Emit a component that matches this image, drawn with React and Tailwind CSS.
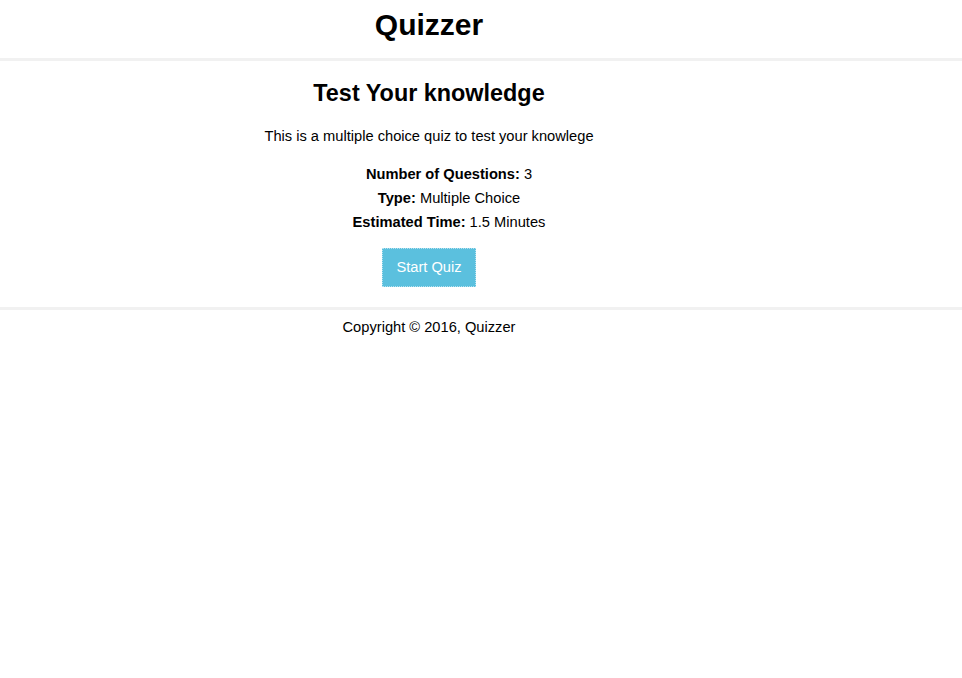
export default function App() {
  const font = { fontFamily: '"Liberation Sans", Arial, sans-serif' };
  return (
    <div className="min-h-screen bg-white text-black" style={font}>
      <header className="border-b-[3px] border-[#f1f1f1] h-[61px]">
        <div className="w-[858px] text-center pt-[7px]">
          <h1 className="text-[30px] font-bold leading-[36px]">Quizzer</h1>
        </div>
      </header>
      <main className="border-b-[3px] border-[#f1f1f1] h-[249px]">
        <div className="w-[858px] flex flex-col items-center text-center">
          <h2 className="mt-[18px] text-[23.4px] font-bold leading-[28px]">Test Your knowledge</h2>
          <p className="mt-[17px] text-[14.66px] leading-[24px]">
            This is a multiple choice quiz to test your knowlege
          </p>
          <ul className="mt-[14px] pl-[40px] text-[14.66px] leading-[24px]">
            <li>
              <strong>Number of Questions:</strong> 3
            </li>
            <li>
              <strong>Type:</strong> Multiple Choice
            </li>
            <li>
              <strong>Estimated Time:</strong> 1.5 Minutes
            </li>
          </ul>
          <button className="mt-[14px] w-[94px] h-[39px] bg-[#5bc0de] border border-dotted border-[#b6e2ef] text-white text-[14.66px] flex items-center justify-center">
            Start Quiz
          </button>
        </div>
      </main>
      <footer>
        <div className="w-[858px] text-center pt-[5px]">
          <p className="text-[14.66px] leading-[24px]">Copyright © 2016, Quizzer</p>
        </div>
      </footer>
    </div>
  );
}
